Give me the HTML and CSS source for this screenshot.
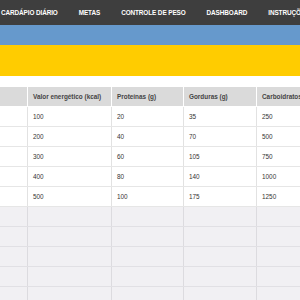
FILE: index.html
```html
<!DOCTYPE html>
<html lang="pt-BR">
<head>
    <meta charset="UTF-8">
    <meta name="viewport" content="width=device-width, initial-scale=1.0">
    <title>Controle de Dieta</title>
    <link rel="stylesheet" href="styles.css">
</head>
<body>
    <nav class="nav">
        <a class="nav-item">CARDÁPIO DIÁRIO</a>
        <a class="nav-item">METAS</a>
        <a class="nav-item">CONTROLE DE PESO</a>
        <a class="nav-item">DASHBOARD</a>
        <a class="nav-item">INSTRUÇÕES</a>
    </nav>

    <div class="band-blue"></div>
    <div class="band-yellow"></div>

    <main class="sheet">
        <div class="row head">
            <div class="cell"></div>
            <div class="cell">Valor energético (kcal)</div>
            <div class="cell">Proteínas (g)</div>
            <div class="cell">Gorduras (g)</div>
            <div class="cell">Carboidratos (g)</div>
        </div>
        <div class="row">
            <div class="cell"></div>
            <div class="cell">100</div>
            <div class="cell">20</div>
            <div class="cell">35</div>
            <div class="cell">250</div>
        </div>
        <div class="row">
            <div class="cell"></div>
            <div class="cell">200</div>
            <div class="cell">40</div>
            <div class="cell">70</div>
            <div class="cell">500</div>
        </div>
        <div class="row">
            <div class="cell"></div>
            <div class="cell">300</div>
            <div class="cell">60</div>
            <div class="cell">105</div>
            <div class="cell">750</div>
        </div>
        <div class="row">
            <div class="cell"></div>
            <div class="cell">400</div>
            <div class="cell">80</div>
            <div class="cell">140</div>
            <div class="cell">1000</div>
        </div>
        <div class="row">
            <div class="cell"></div>
            <div class="cell">500</div>
            <div class="cell">100</div>
            <div class="cell">175</div>
            <div class="cell">1250</div>
        </div>
        <!-- linhas vazias -->
        <div class="row empty"><div class="cell"></div><div class="cell"></div><div class="cell"></div><div class="cell"></div><div class="cell"></div></div>
        <div class="row empty"><div class="cell"></div><div class="cell"></div><div class="cell"></div><div class="cell"></div><div class="cell"></div></div>
        <div class="row empty"><div class="cell"></div><div class="cell"></div><div class="cell"></div><div class="cell"></div><div class="cell"></div></div>
        <div class="row empty"><div class="cell"></div><div class="cell"></div><div class="cell"></div><div class="cell"></div><div class="cell"></div></div>
        <div class="row empty"><div class="cell"></div><div class="cell"></div><div class="cell"></div><div class="cell"></div><div class="cell"></div></div>
    </main>
</body>
</html>
```

FILE: styles.css
```css
* {
    box-sizing: border-box;
    margin: 0;
    padding: 0;
}

body {
    font-family: 'Liberation Sans', Arial, sans-serif;
    background-color: white;
    color: #333;
    width: 300px;
    height: 300px;
    overflow: hidden;
}

.nav {
    display: flex;
    align-items: center;
    height: 25px;
    background-color: #3e3e3e;
    padding-left: 1px;
    gap: 21px;
    white-space: nowrap;
}

.nav-item {
    color: white;
    font-size: 6.4px;
    font-weight: bold;
    letter-spacing: -0.1px;
}

.band-blue {
    height: 20px;
    background-color: #6699cc;
}

.band-yellow {
    height: 31px;
    background-color: #ffcc00;
}

.sheet {
    margin-top: 11px;
    width: 360px;
}

.row {
    display: grid;
    grid-template-columns: 28px 84px 72px 73px 103px;
    height: 20px;
    border-bottom: 1px solid #e6e6e6;
}

.cell {
    display: flex;
    align-items: center;
    padding-left: 5px;
    font-size: 6.4px;
    border-right: 1px solid #e2e2e2;
    white-space: nowrap;
}

.head {
    height: 20px;
    border-bottom: 1px solid white;
}

.head .cell {
    background-color: #dadada;
    border-right: 1px solid white;
    font-weight: bold;
    color: #444;
}

.empty {
    background-color: #f1f0f3;
    border-bottom: 1px solid #e1e0e4;
}

.empty .cell {
    border-right: 1px solid #dcdbdf;
}
```
